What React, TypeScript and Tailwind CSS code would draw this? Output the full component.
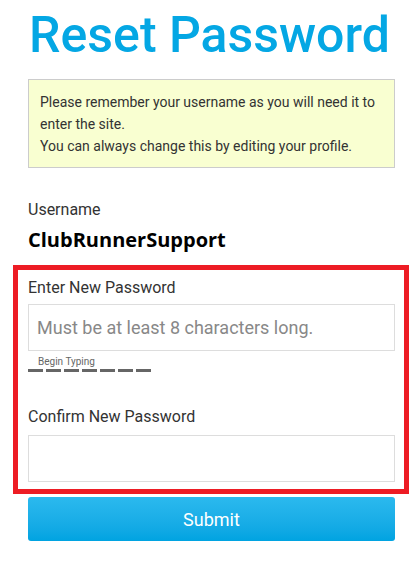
import React from "react";

export default function App() {
  const roboto = { fontFamily: "Roboto, 'Liberation Sans', sans-serif" };
  return (
    <div className="w-[419px] h-[568px] bg-white overflow-hidden" style={roboto}>
      <div className="pl-[28px] pr-[24px]">
        <h1 className="-ml-[28px] -mr-[24px] whitespace-nowrap text-[50px] leading-[60px] font-medium text-[#04a7e4] pt-[5px] m-0 text-center">
          Reset Password
        </h1>
        <div className="mt-[14px] border border-[#cccccc] bg-[#f9ffd1] px-[11px] py-[11px] text-[14px] leading-[22px] text-[#333333] h-[89px]">
          Please remember your username as you will need it to enter the site.
          <br />
          You can always change this by editing your profile.
        </div>
        <div className="mt-[31px] text-[16px] leading-[22px] text-[#333333]">Username</div>
        <div
          className="mt-[6px] text-[20px] leading-[26px] font-bold text-black"
          style={{ fontFamily: "'Open Sans', 'Noto Sans', sans-serif" }}
        >
          ClubRunnerSupport
        </div>
        <div className="mt-[12px] -ml-[15px] -mr-[14px] border-[5px] border-[#ed1c24] pl-[10px] pr-[9px] pt-[7px] pb-[8px] h-[229px]">
          <div className="text-[16px] leading-[22px] text-[#333333]">Enter New Password</div>
          <input
            type="password"
            placeholder="Must be at least 8 characters long."
            className="mt-[5px] block w-full h-[47px] border border-[#dddddd] px-[8px] text-[18px] text-[#333] placeholder:text-[#888888] outline-none"
            style={roboto}
          />
          <div className="mt-[5px] pl-[10px] text-[10px] leading-[12px] text-[#666666]">Begin Typing</div>
          <div className="mt-[1px] flex gap-[3px]">
            {[0, 1, 2, 3, 4, 5, 6].map((i) => (
              <div key={i} className="w-[15px] h-[3px] bg-[#666666]" />
            ))}
          </div>
          <div className="mt-[34px] text-[16px] leading-[22px] text-[#333333]">Confirm New Password</div>
          <input
            type="password"
            className="mt-[7px] block w-full h-[47px] border border-[#dddddd] px-[8px] text-[18px] outline-none"
          />
        </div>
        <button
          className="mt-[3px] block w-full h-[44px] rounded-[3px] text-white text-[18px] bg-gradient-to-b from-[#2bb9ee] to-[#00a3e1]"
          style={roboto}
        >
          Submit
        </button>
      </div>
    </div>
  );
}
